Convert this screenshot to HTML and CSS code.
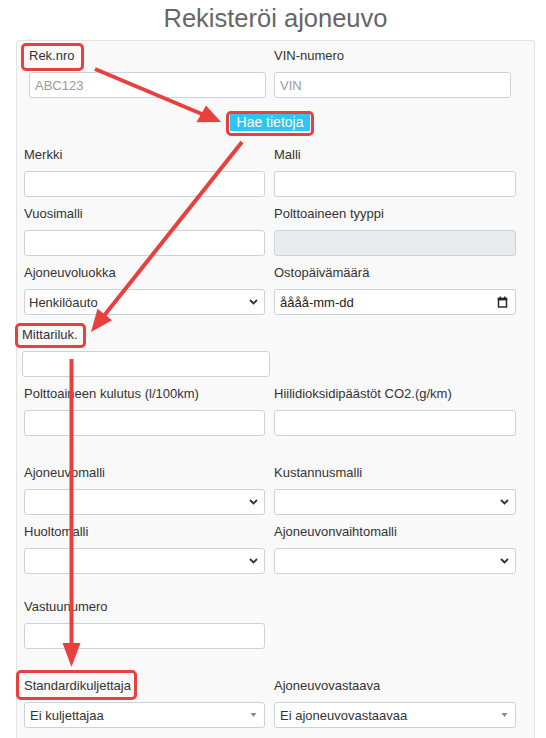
FILE: index.html
```html
<!DOCTYPE html>
<html lang="fi">
<head>
<meta charset="utf-8">
<title>Rekisteröi ajoneuvo</title>
<link rel="stylesheet" href="styles.css">
</head>
<body>
<h1 class="title">Rekisteröi ajoneuvo</h1>
<div class="panel">
  <div class="row row-top">
    <div class="field">
      <label class="lbl"><span class="mark mark-rek">Rek.nro</span></label>
      <input class="input" type="text" placeholder="ABC123">
    </div>
    <div class="field">
      <label class="lbl">VIN-numero</label>
      <input class="input" type="text" placeholder="VIN">
    </div>
  </div>
  <div class="btn-row">
    <span class="mark mark-btn"><button class="btn" type="button">Hae tietoja</button></span>
  </div>

  <div class="row row-first">
    <div class="field"><label class="lbl">Merkki</label><input class="input" type="text"></div>
    <div class="field"><label class="lbl">Malli</label><input class="input" type="text"></div>
  </div>
  <div class="row">
    <div class="field"><label class="lbl">Vuosimalli</label><input class="input" type="text"></div>
    <div class="field"><label class="lbl">Polttoaineen tyyppi</label><input class="input input-disabled" type="text" disabled></div>
  </div>
  <div class="row">
    <div class="field"><label class="lbl">Ajoneuvoluokka</label>
      <div class="control select"><span class="val">Henkilöauto</span>
        <svg class="chev" width="9" height="6" viewBox="0 0 9 6"><path d="M1 1 L4.5 4.5 L8 1" fill="none" stroke="#333" stroke-width="1.8"/></svg>
      </div>
    </div>
    <div class="field"><label class="lbl">Ostopäivämäärä</label>
      <div class="control date"><span class="val">åååå-mm-dd</span>
        <svg class="cal" width="11" height="12" viewBox="0 0 11 12"><rect x="1.5" y="2.5" width="8" height="8.5" fill="none" stroke="#222" stroke-width="1.4"/><rect x="0.8" y="1.8" width="9.4" height="2.6" fill="#222"/><rect x="2.5" y="0.5" width="1.4" height="2" fill="#222"/><rect x="7.1" y="0.5" width="1.4" height="2" fill="#222"/></svg>
      </div>
    </div>
  </div>
  <div class="row row-mittari">
    <div class="field field-mittari"><label class="lbl"><span class="mark mark-mittari">Mittariluk.</span></label><input class="input" type="text"></div>
  </div>
  <div class="row">
    <div class="field"><label class="lbl">Polttoaineen kulutus (l/100km)</label><input class="input" type="text"></div>
    <div class="field"><label class="lbl">Hiilidioksidipäästöt CO2.(g/km)</label><input class="input" type="text"></div>
  </div>
  <div class="row row-gap-lg">
    <div class="field"><label class="lbl">Ajoneuvomalli</label>
      <div class="control select"><span class="val"></span>
        <svg class="chev" width="9" height="6" viewBox="0 0 9 6"><path d="M1 1 L4.5 4.5 L8 1" fill="none" stroke="#333" stroke-width="1.8"/></svg>
      </div>
    </div>
    <div class="field"><label class="lbl">Kustannusmalli</label>
      <div class="control select"><span class="val"></span>
        <svg class="chev" width="9" height="6" viewBox="0 0 9 6"><path d="M1 1 L4.5 4.5 L8 1" fill="none" stroke="#333" stroke-width="1.8"/></svg>
      </div>
    </div>
  </div>
  <div class="row">
    <div class="field"><label class="lbl">Huoltomalli</label>
      <div class="control select"><span class="val"></span>
        <svg class="chev" width="9" height="6" viewBox="0 0 9 6"><path d="M1 1 L4.5 4.5 L8 1" fill="none" stroke="#333" stroke-width="1.8"/></svg>
      </div>
    </div>
    <div class="field"><label class="lbl">Ajoneuvonvaihtomalli</label>
      <div class="control select"><span class="val"></span>
        <svg class="chev" width="9" height="6" viewBox="0 0 9 6"><path d="M1 1 L4.5 4.5 L8 1" fill="none" stroke="#333" stroke-width="1.8"/></svg>
      </div>
    </div>
  </div>
  <div class="row row-gap-md">
    <div class="field"><label class="lbl">Vastuunumero</label><input class="input" type="text"></div>
  </div>
  <div class="row row-gap-lg">
    <div class="field"><label class="lbl"><span class="mark mark-std">Standardikuljettaja</span></label>
      <div class="control select2"><span class="val">Ei kuljettajaa</span>
        <svg class="tri" width="7" height="4" viewBox="0 0 7 4"><path d="M0.5 0 L6.5 0 L3.5 4 Z" fill="#888"/></svg>
      </div>
    </div>
    <div class="field"><label class="lbl">Ajoneuvovastaava</label>
      <div class="control select2"><span class="val">Ei ajoneuvovastaavaa</span>
        <svg class="tri" width="7" height="4" viewBox="0 0 7 4"><path d="M0.5 0 L6.5 0 L3.5 4 Z" fill="#888"/></svg>
      </div>
    </div>
  </div>
</div>

<svg class="arrows" width="546" height="738" viewBox="0 0 546 738">
  <g fill="#e8403f" stroke="#e8403f">
    <line x1="95" y1="69" x2="203" y2="114.5" stroke-width="4"/>
    <polygon points="221,122 196.5,122.3 206,105.5" stroke="none"/>
    <line x1="242" y1="142" x2="103" y2="317" stroke-width="4"/>
    <polygon points="91,332 97.5,308.8 112,320.3" stroke="none"/>
    <line x1="71.5" y1="359" x2="71.5" y2="646" stroke-width="4"/>
    <polygon points="62.5,643 80.5,643 71.5,667" stroke="none"/>
  </g>
</svg>
</body>
</html>
```

FILE: styles.css
```css
html, body {
  margin: 0;
  padding: 0;
}
body {
  position: relative;
  width: 546px;
  height: 738px;
  overflow: hidden;
  background: #ffffff;
  font-family: "Liberation Sans", Arial, Helvetica, sans-serif;
  font-size: 13px;
  color: #333;
}
.title {
  margin: 0 11px 4px 16px;
  font-size: 25.5px;
  font-weight: normal;
  line-height: 36px;
  text-align: center;
  color: #666;
}
.panel {
  box-sizing: border-box;
  margin-left: 16px;
  width: 519px;
  border: 1px solid #e3e3e3;
  border-radius: 3px;
  background: #f9f9f9;
  padding: 7px 0 30px 7px;
}
.row {
  display: grid;
  grid-template-columns: 241px 242px;
  column-gap: 9px;
  margin-top: 9px;
}
.row-top {
  margin-top: 0;
  margin-left: 5px;
  grid-template-columns: 237px 237px;
  column-gap: 8px;
}
.row-first { margin-top: 16px; }
.row-mittari {
  margin-top: 12px;
  margin-left: -2px;
  grid-template-columns: 248px;
}
.row-gap-lg { margin-top: 29px; }
.row-gap-md { margin-top: 25px; }

.field {
  display: flex;
  flex-direction: column;
  align-items: flex-start;
}
.lbl {
  display: block;
  line-height: 16px;
  margin-bottom: 8px;
  color: #333;
  white-space: nowrap;
}
.input, .control {
  box-sizing: border-box;
  width: 100%;
  height: 26px;
  margin: 0;
  border: 1px solid #cdd2d8;
  border-radius: 3px;
  background: #fff;
  font-family: "Liberation Sans", Arial, Helvetica, sans-serif;
  font-size: 13px;
  color: #333;
  padding: 0 5px;
  outline: none;
}
.input::placeholder { color: #9a9a9a; }
.input-disabled { background: #e9ecef; }
.control {
  display: flex;
  align-items: center;
  justify-content: space-between;
}
.select { padding: 0 5px 0 4px; }
.select .chev { margin-right: 1px; }
.date { padding: 0 7px 0 5px; color: #222; }
.select2 { padding: 0 7px 0 5px; }
.val { white-space: nowrap; }

.btn-row {
  width: 482px;
  margin: 16px 0 0 5px;
  text-align: center;
  line-height: 17px;
  height: 17px;
}
.btn {
  display: block;
  width: 80px;
  height: 17px;
  padding: 0;
  border: none;
  border-radius: 1px;
  background: #2fc4f2;
  color: #fff;
  font-family: "Liberation Sans", Arial, Helvetica, sans-serif;
  font-size: 14px;
  line-height: 17px;
}

/* red annotation boxes */
.mark {
  position: relative;
  display: inline-block;
}
.mark::after {
  content: "";
  position: absolute;
  border: 3px solid #e8403f;
  border-radius: 5px;
  pointer-events: none;
}
.mark-rek::after { top: -5px; bottom: -7px; left: -8px; right: -9px; }
.mark-btn { vertical-align: top; }
.mark-btn::after { top: -3px; bottom: -5px; left: -4px; right: -4px; }
.mark-mittari::after { top: -4px; bottom: -5px; left: -7px; right: -8px; }
.mark-std::after { top: -8px; bottom: -6px; left: -8px; right: -6px; }

.arrows {
  position: absolute;
  top: 0;
  left: 0;
  pointer-events: none;
}
```
